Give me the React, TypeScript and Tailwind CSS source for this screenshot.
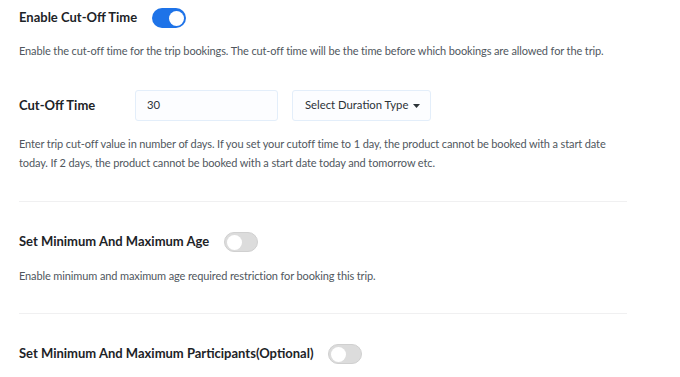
import React from 'react';

const Toggle: React.FC<{ on?: boolean }> = ({ on }) => (
    <div
        className={`w-[34px] h-[20px] rounded-full flex items-center px-[2px] ${on ? 'bg-[#1e73e8] justify-end' : 'bg-[#dcdcdc] border border-[#d0d0d0] justify-start'}`}
    >
        <div className="w-[15px] h-[15px] rounded-full bg-white"></div>
    </div>
);

const Heading: React.FC<{ label: string; on?: boolean }> = ({ label, on }) => (
    <div className="flex items-center h-[20px] gap-[15px]">
        <span className="text-[13px] font-bold text-[#1d2327]">{label}</span>
        <Toggle on={on} />
    </div>
);

export default function App() {
    return (
        <div className="w-[680px] h-[377px] bg-white overflow-hidden font-['Lato',sans-serif]">
            <div className="w-[608px] ml-[19px] pt-[8px]">
                <Heading label="Enable Cut-Off Time" on />
                <p className="mt-[13px] text-[11px] tracking-[-0.12px] leading-[19px] text-[#50575e]">
                    Enable the cut-off time for the trip bookings. The cut-off time will be the time before which bookings are allowed for the trip.
                </p>

                <div className="mt-[30px] flex items-center h-[31px]">
                    <span className="w-[116px] text-[13px] font-bold text-[#1d2327]">Cut-Off Time</span>
                    <div className="w-[143px] h-[31px] border border-[#e3eefa] bg-[#fcfdff] rounded-[3px] flex items-center pl-[11px] text-[11.3px] text-[#2c3338]">
                        30
                    </div>
                    <div className="ml-[14px] w-[139px] h-[31px] border border-[#e3eefa] bg-[#fcfdff] rounded-[3px] flex items-center pl-[12px] gap-[5px] text-[11.3px] text-[#2c3338] whitespace-nowrap">
                        <span>Select Duration Type</span>
                        <svg width="7" height="4" viewBox="0 0 7 4"><path d="M0 0h7L3.5 4z" fill="#2c3338" /></svg>
                    </div>
                </div>

                <p className="mt-[13px] text-[11px] tracking-[-0.12px] leading-[19px] text-[#50575e]">
                    Enter trip cut-off value in number of days. If you set your cutoff time to 1 day, the product cannot be booked with a start date today. If 2 days, the product cannot be booked with a start date today and tomorrow etc.
                </p>

                <div className="mt-[29px] h-px bg-[#f0f0f1]"></div>

                <div className="mt-[30px]">
                    <Heading label="Set Minimum And Maximum Age" />
                </div>
                <p className="mt-[14px] text-[11px] tracking-[-0.12px] leading-[19px] text-[#50575e]">
                    Enable minimum and maximum age required restriction for booking this trip.
                </p>

                <div className="mt-[28px] h-px bg-[#f0f0f1]"></div>

                <div className="mt-[30px]">
                    <Heading label="Set Minimum And Maximum Participants(Optional)" />
                </div>
            </div>
        </div>
    );
}
